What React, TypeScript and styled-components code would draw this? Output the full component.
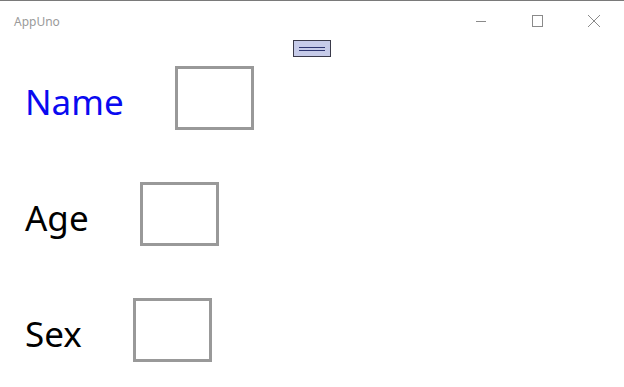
import React from "react";
import styled, { createGlobalStyle } from "styled-components";

const Global = createGlobalStyle`
  html, body { margin: 0; padding: 0; background: #ffffff; }
  body { font-family: "Noto Sans", "Open Sans", sans-serif; }
`;

const Window = styled.div`
  width: 624px;
  height: 387px;
  box-sizing: border-box;
  border-top: 1px solid #7a7a7a;
  background: #fff;
  display: flex;
  flex-direction: column;
  overflow: hidden;
`;

const TitleBar = styled.div`
  height: 37px;
  display: flex;
  align-items: flex-start;
  padding-left: 14px;
  box-sizing: border-box;
`;

const Title = styled.span`
  font-size: 12px;
  color: #9a9a9a;
  flex: 1;
  margin-top: 12px;
`;

const Controls = styled.div`
  display: flex;
  height: 37px;
  padding-right: 2px;
`;

const ControlButton = styled.div`
  width: 56px;
  height: 40px;
  display: flex;
  align-items: center;
  justify-content: center;
  color: #8a8a8a;
`;

const Toolbar = styled.div`
  display: flex;
  justify-content: center;
  padding-top: 2px;
`;

const SmallButton = styled.div`
  width: 38px;
  height: 17px;
  box-sizing: border-box;
  border: 1px solid #3a3a4a;
  background: #c6cbe9;
  display: flex;
  align-items: center;
  justify-content: center;
`;

const Form = styled.div`
  display: flex;
  flex-direction: column;
  gap: 52px;
  padding-left: 25px;
  padding-top: 9px;
`;

const Row = styled.div`
  display: flex;
  align-items: center;
  height: 64px;
`;

const Label = styled.span<{ $color?: string }>`
  font-family: "Noto Sans", "Open Sans", sans-serif;
  font-size: 35px;
  line-height: 1;
  color: ${(p) => p.$color ?? "#000"};
  margin-top: 6px;
`;

const Field = styled.div`
  width: 79px;
  height: 64px;
  box-sizing: border-box;
  border: 3px solid #999999;
  margin-left: 51px;
  background: #fff;
`;

export default function App() {
  return (
    <>
      <Global />
      <Window>
        <TitleBar>
          <Title>AppUno</Title>
          <Controls>
            <ControlButton>
              <svg width="12" height="12" viewBox="0 0 12 12">
                <path d="M0 6.5h10" stroke="currentColor" strokeWidth="1" />
              </svg>
            </ControlButton>
            <ControlButton>
              <svg width="12" height="12" viewBox="0 0 12 12">
                <rect x="0.5" y="0.5" width="10" height="11" fill="none" stroke="currentColor" strokeWidth="1" />
              </svg>
            </ControlButton>
            <ControlButton>
              <svg width="14" height="14" viewBox="0 0 14 14">
                <path d="M1 1L13 13M13 1L1 13" stroke="currentColor" strokeWidth="1" />
              </svg>
            </ControlButton>
          </Controls>
        </TitleBar>
        <Toolbar>
          <SmallButton>
            <svg width="26" height="4" viewBox="0 0 26 4">
              <path d="M0 0.5h26M0 3.5h26" stroke="#2c3470" strokeWidth="1" />
            </svg>
          </SmallButton>
        </Toolbar>
        <Form>
          <Row>
            <Label $color="#0a0af0">Name</Label>
            <Field />
          </Row>
          <Row>
            <Label>Age</Label>
            <Field />
          </Row>
          <Row>
            <Label>Sex</Label>
            <Field />
          </Row>
        </Form>
      </Window>
    </>
  );
}
